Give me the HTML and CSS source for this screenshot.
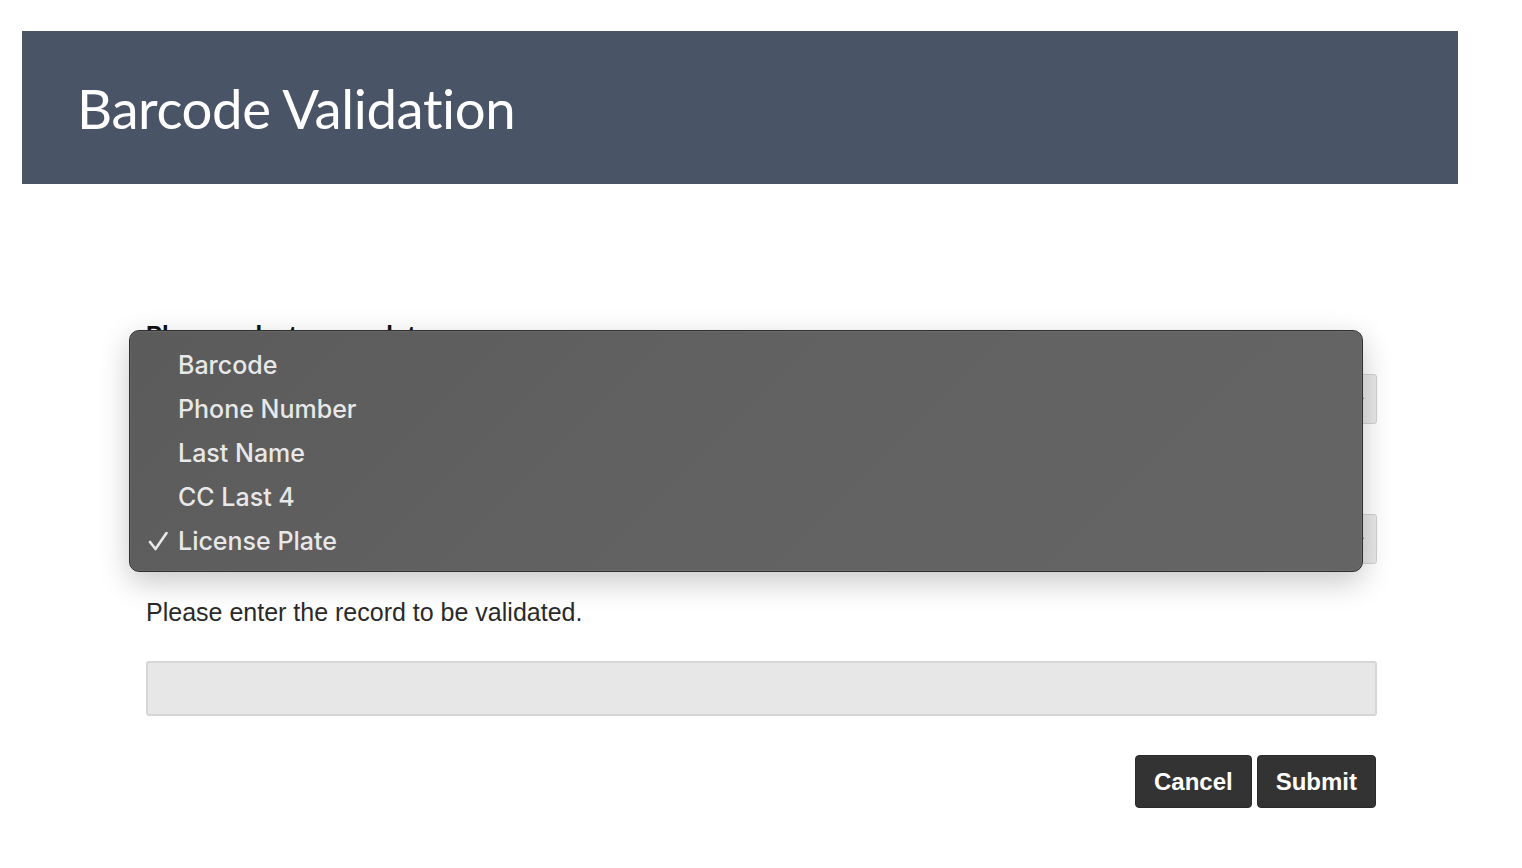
FILE: index.html
```html
<!DOCTYPE html>
<html>
<head>
<meta charset="utf-8">
<title>Barcode Validation</title>
<link rel="stylesheet" href="styles.css">
</head>
<body>
<div class="page">
  <header class="banner">
    <h1 class="title">Barcode Validation</h1>
  </header>
  <main class="form">
    <div class="field">
      <label class="label">Please select a search type.</label>
      <div class="select"><span class="caret">&#8964;</span></div>
    </div>
    <div class="field">
      <label class="label">Please select a search option.</label>
      <div class="select"><span class="caret">&#8964;</span></div>
    </div>
    <div class="field field-text">
      <label class="label-plain">Please enter the record to be validated.</label>
      <div class="input"></div>
    </div>
    <div class="actions">
      <button class="btn">Cancel</button>
      <button class="btn">Submit</button>
    </div>
    <ul class="menu">
      <li class="item">Barcode</li>
      <li class="item">Phone Number</li>
      <li class="item">Last Name</li>
      <li class="item">CC Last 4</li>
      <li class="item checked"><svg class="check" width="20" height="20" viewBox="0 0 20 20"><polyline points="2,11 7.5,18 18.5,2" fill="none" stroke="#e8e8e8" stroke-width="2.6" stroke-linecap="round" stroke-linejoin="round"/></svg>License Plate</li>
    </ul>
  </main>
</div>
</body>
</html>
```
FILE: styles.css
```css
* { box-sizing: border-box; }
html, body { margin: 0; padding: 0; background: #ffffff; }
body { font-family: "Liberation Sans", Arial, sans-serif; color: #222; }
.page { padding-top: 31px; }
.banner {
  margin-left: 22px;
  width: 1436px;
  height: 153px;
  background: #4a5467;
  display: flex;
  align-items: center;
  padding-left: 55px;
}
.title {
  margin: 0;
  font-family: "Lato", sans-serif;
  font-weight: 400;
  font-size: 54.5px;
  color: #ffffff;
  letter-spacing: -0.4px;
}
.form {
  position: relative;
  margin-left: 146px;
  width: 1231px;
  padding-top: 138px;
}
.field { display: flex; flex-direction: column; }
.label {
  font-weight: 700;
  font-size: 24px;
  line-height: 26px;
  color: #111;
  height: 26px;
}
.select {
  margin-top: 26px;
  height: 50px;
  background: #e8e8e8;
  border: 1px solid #d2d2d2;
  border-radius: 3px;
  position: relative;
  margin-bottom: 38px;
}
.caret { position: absolute; right: 8px; top: 8px; font-size: 20px; color: #222; }
.label-plain {
  font-size: 25px;
  line-height: 28px;
  color: #2a2a2a;
  margin-top: -4px;
}
.input {
  margin-top: 35px;
  height: 55px;
  background: #e7e7e7;
  border: 2px solid #d6d6d6;
  border-radius: 3px;
}
.actions {
  display: flex;
  justify-content: flex-end;
  gap: 5px;
  margin-top: 39px;
  padding-right: 1px;
}
.btn {
  height: 53px;
  padding: 0 18px;
  background: #333333;
  color: #ffffff;
  border: 1px solid #2a2a2a;
  border-radius: 4px;
  font-family: "Liberation Sans", Arial, sans-serif;
  font-weight: 700;
  font-size: 24px;
}
.menu {
  position: absolute;
  left: -17px;
  top: 146px;
  width: 1234px;
  height: 242px;
  margin: 0;
  padding: 12px 0 0 0;
  list-style: none;
  background: linear-gradient(135deg, #5b5b5b 0%, #626262 50%, #646464 100%);
  border: 1.5px solid #2f2f2f;
  border-radius: 10px;
  box-shadow: 0 10px 30px rgba(0,0,0,0.22), 0 0 0 1px rgba(255,255,255,0.06) inset;
}
.item {
  position: relative;
  height: 44px;
  line-height: 44px;
  padding-left: 48px;
  font-family: "Inter", sans-serif;
  font-weight: 500;
  font-size: 25px;
  color: #e8e8e8;
}
.check {
  position: absolute;
  left: 18px;
  top: 12px;
}
```
